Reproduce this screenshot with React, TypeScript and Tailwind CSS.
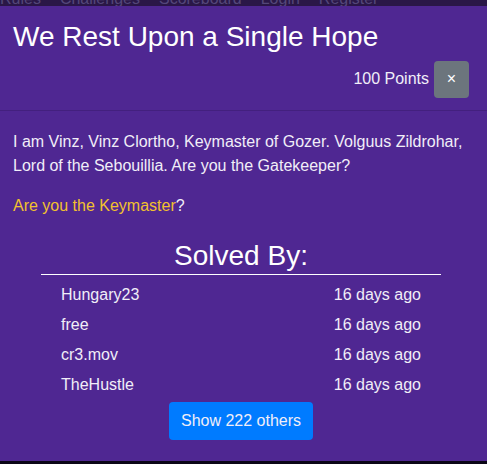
import React from 'react';

const solves = [
	{ name: 'Hungary23', when: '16 days ago' },
	{ name: 'free', when: '16 days ago' },
	{ name: 'cr3.mov', when: '16 days ago' },
	{ name: 'TheHustle', when: '16 days ago' },
];

export default function App() {
	return (
		<div
			className="w-[487px] h-[464px] flex flex-col bg-[#0b0616] overflow-hidden text-white"
			style={{ fontFamily: '"Liberation Sans", Arial, sans-serif' }}>
			{/* nav bar peeking from behind the modal */}
			<div className="h-[6px] shrink-0 overflow-hidden bg-[#2a1747]">
				<div className="-mt-[11px] flex gap-[19px] text-[16px] leading-[20px] text-[#54477a]">
					<span>Rules</span>
					<span>Challenges</span>
					<span>Scoreboard</span>
					<span>Login</span>
					<span>Register</span>
				</div>
			</div>

			<div className="h-[455px] shrink-0 flex flex-col bg-[#4f2792]">
				<div className="pt-[14px] pb-[12px] pl-[13px] pr-[18px] border-b border-[#43207e]">
					<h3 className="text-[28px] leading-[1.2] font-normal">We Rest Upon a Single Hope</h3>
					<div className="mt-[7px] flex items-center justify-end gap-[5px]">
						<span className="text-[16px] text-[#f1eef8]">100 Points</span>
						<button className="w-[35px] h-[37px] rounded-[4px] bg-[#6c757d] text-[16px] text-white flex items-center justify-center">
							×
						</button>
					</div>
				</div>

				<div className="pt-[19px] pl-[13px] pr-[18px] text-[16px] leading-[24px] text-[#f1eef8]">
					<p className="mb-[16px]">
						I am Vinz, Vinz Clortho, Keymaster of Gozer. Volguus Zildrohar, Lord of the Sebouillia. Are you the
						Gatekeeper?
					</p>
					<p>
						<span className="text-[#f2c12e]">Are you the Keymaster</span>?
					</p>

					<div className="mt-[21px] w-[400px] mx-auto flex flex-col items-center">
						<h3 className="w-full text-center text-[28px] leading-[1.2] pb-[2px] border-b border-white text-white">
							Solved By:
						</h3>
						<div className="w-full mt-[5px] px-[20px]">
							{solves.map((s) => (
								<div key={s.name} className="flex justify-between py-[3px]">
									<span>{s.name}</span>
									<span>{s.when}</span>
								</div>
							))}
						</div>
						<button className="mt-[2px] h-[38px] px-[12px] rounded-[4px] bg-[#007bff] text-[16px] text-[#f1eef8]">
							Show 222 others
						</button>
					</div>
				</div>
			</div>
		</div>
	);
}
